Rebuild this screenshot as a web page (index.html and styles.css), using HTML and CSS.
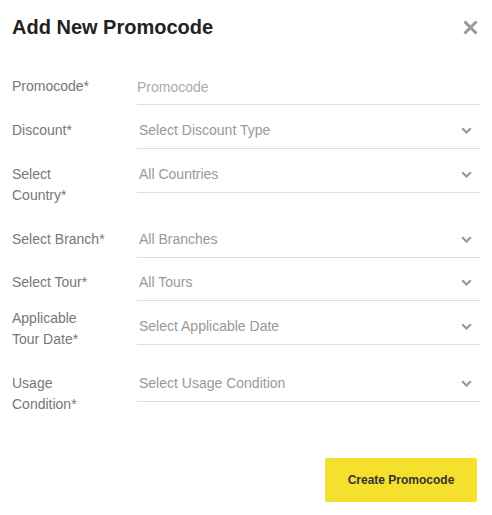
FILE: index.html
```html
<!DOCTYPE html>
<html lang="en">
<head>
<meta charset="utf-8">
<title>Add New Promocode</title>
<link rel="stylesheet" href="styles.css">
</head>
<body>
<div class="modal">
  <div class="modal-header">
    <h1 class="modal-title">Add New Promocode</h1>
    <button class="close-btn" type="button" aria-label="Close">
      <svg width="15" height="15" viewBox="0 0 15 15"><path d="M1.5 1.5 L13.5 13.5 M13.5 1.5 L1.5 13.5" stroke="#999" stroke-width="3" fill="none"/></svg>
    </button>
  </div>
  <form class="form">
    <div class="row">
      <label class="label">Promocode*</label>
      <div class="field"><input class="control" type="text" placeholder="Promocode"></div>
    </div>
    <div class="row">
      <label class="label">Discount*</label>
      <div class="field">
        <select class="control select"><option>Select Discount Type</option></select>
        <svg class="chevron" width="11" height="7" viewBox="0 0 11 7"><path d="M1.2 1.2 L5.5 5.5 L9.8 1.2" stroke="#999" stroke-width="2.2" fill="none"/></svg>
      </div>
    </div>
    <div class="row">
      <label class="label">Select<br>Country*</label>
      <div class="field">
        <select class="control select"><option>All Countries</option></select>
        <svg class="chevron" width="11" height="7" viewBox="0 0 11 7"><path d="M1.2 1.2 L5.5 5.5 L9.8 1.2" stroke="#999" stroke-width="2.2" fill="none"/></svg>
      </div>
    </div>
    <div class="row">
      <label class="label">Select Branch*</label>
      <div class="field">
        <select class="control select"><option>All Branches</option></select>
        <svg class="chevron" width="11" height="7" viewBox="0 0 11 7"><path d="M1.2 1.2 L5.5 5.5 L9.8 1.2" stroke="#999" stroke-width="2.2" fill="none"/></svg>
      </div>
    </div>
    <div class="row row-tight">
      <label class="label">Select Tour*</label>
      <div class="field">
        <select class="control select"><option>All Tours</option></select>
        <svg class="chevron" width="11" height="7" viewBox="0 0 11 7"><path d="M1.2 1.2 L5.5 5.5 L9.8 1.2" stroke="#999" stroke-width="2.2" fill="none"/></svg>
      </div>
    </div>
    <div class="row">
      <label class="label label-raised">Applicable<br>Tour Date*</label>
      <div class="field">
        <select class="control select"><option>Select Applicable Date</option></select>
        <svg class="chevron" width="11" height="7" viewBox="0 0 11 7"><path d="M1.2 1.2 L5.5 5.5 L9.8 1.2" stroke="#999" stroke-width="2.2" fill="none"/></svg>
      </div>
    </div>
    <div class="row">
      <label class="label">Usage<br>Condition*</label>
      <div class="field">
        <select class="control select"><option>Select Usage Condition</option></select>
        <svg class="chevron" width="11" height="7" viewBox="0 0 11 7"><path d="M1.2 1.2 L5.5 5.5 L9.8 1.2" stroke="#999" stroke-width="2.2" fill="none"/></svg>
      </div>
    </div>
    <div class="actions">
      <button class="submit" type="button">Create Promocode</button>
    </div>
  </form>
</div>
</body>
</html>
```

FILE: styles.css
```css
* { box-sizing: border-box; }
html, body { margin: 0; padding: 0; background: #fff; }
body { font-family: "Liberation Sans", Arial, sans-serif; }

.modal { width: 492px; }

.modal-header {
  display: flex;
  justify-content: space-between;
  align-items: center;
  padding: 15px 14px 0 12px;
}
.modal-title {
  margin: 0;
  font-size: 20px;
  line-height: 24px;
  font-weight: bold;
  color: #222;
}
.close-btn {
  border: 0;
  background: none;
  padding: 0;
  width: 15px;
  height: 15px;
  display: flex;
  cursor: pointer;
}

.form {
  margin-top: 37px;
  padding: 0 12px 0 12px;
  display: flex;
  flex-direction: column;
  gap: 15px;
}
.row {
  display: flex;
  align-items: flex-start;
}
.row-tight { margin-top: -1px; }
.label {
  width: 125px;
  flex: none;
  font-size: 14px;
  line-height: 21px;
  color: #777;
  padding-bottom: 8px;
}
.label-raised { margin-top: -8px; }

.field {
  flex: 1;
  position: relative;
}
.control {
  display: block;
  width: 100%;
  height: 29px;
  margin: 0;
  padding: 0 0 7px 0;
  border: 0;
  border-bottom: 1px solid #ddd;
  border-radius: 0;
  background: transparent;
  font-family: "Liberation Sans", Arial, sans-serif;
  font-size: 14px;
  line-height: 21px;
  color: #999;
  outline: none;
}
.control::placeholder { color: #aaa; }
.select {
  appearance: none;
  -webkit-appearance: none;
  padding-left: 2px;
  padding-right: 24px;
}
.chevron {
  position: absolute;
  right: 8px;
  top: 7px;
  pointer-events: none;
}

.actions {
  display: flex;
  justify-content: flex-end;
  margin-top: 20px;
  padding-right: 3px;
}
.submit {
  width: 152px;
  height: 44px;
  border: 0;
  border-radius: 2px;
  background: #f5e02e;
  color: #333;
  font-family: "Liberation Sans", Arial, sans-serif;
  font-size: 12px;
  font-weight: bold;
  cursor: pointer;
}
```
